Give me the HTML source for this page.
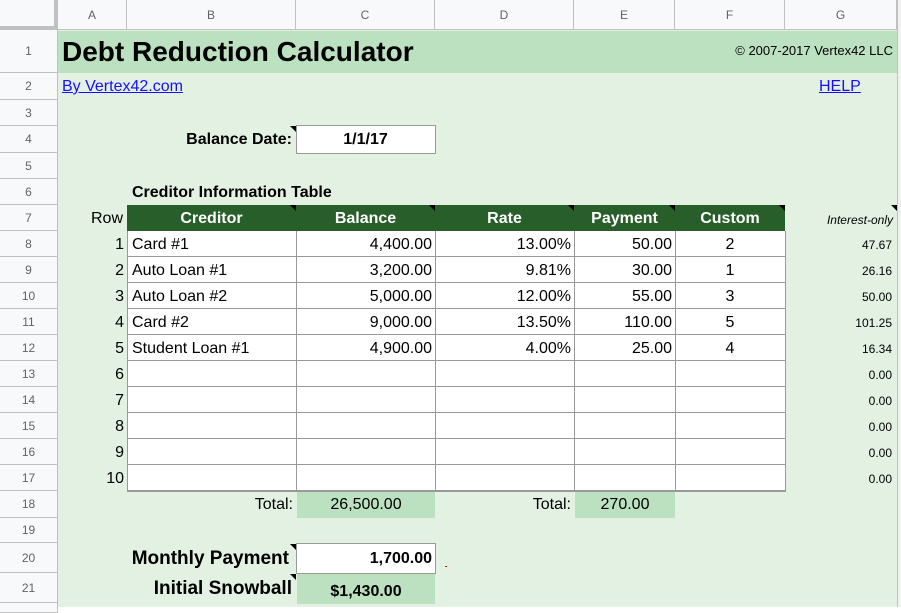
<!DOCTYPE html>
<html><head><meta charset="utf-8"><style>
body{margin:0;width:901px;height:607px;overflow:hidden;background:#fff;font-family:"Liberation Sans",Arial,sans-serif;position:relative}
.a{position:absolute;box-sizing:border-box}
.ch{position:absolute;top:0;height:30px;line-height:30px;text-align:center;font-size:12px;color:#5f6368;border-right:1px solid #c0c0c0;border-bottom:1px solid #c0c0c0;background:#f8f9fa;box-sizing:border-box}
.rh{position:absolute;left:0;width:58px;text-align:center;font-size:12px;color:#5f6368;border-bottom:1px solid #c0c0c0;border-right:1px solid #c0c0c0;background:#f8f9fa;box-sizing:border-box}
.t{position:absolute;font-size:16px;color:#000;white-space:nowrap;height:26px;line-height:26px;box-sizing:border-box}
.r{text-align:right;padding-right:3px}
.c{text-align:center}
.b{font-weight:bold}
.s{font-size:12px}
.vl{position:absolute;top:205px;height:286px;width:1px;background:#999}
.tri{position:absolute;width:0;height:0;border-top:6px solid #000;border-left:6px solid transparent}
</style></head><body>
<!-- sheet bg -->
<div class="a" style="left:58px;top:30px;width:839px;height:577px;background:#e3f1e3"></div>
<div class="a" style="left:897px;top:0;width:4px;height:607px;background:#f1f1f1;border-left:1px solid #c0c0c0"></div>
<div class="a" style="left:58px;top:31px;width:839px;height:42px;background:#bce1c1"></div>
<!-- column headers -->
<div class="ch" style="left:0;width:58px;border-right:4px solid #c0c0c0;border-bottom:4px solid #c0c0c0"></div>
<div class="ch" style="left:58px;width:69px">A</div>
<div class="ch" style="left:127px;width:169px">B</div>
<div class="ch" style="left:296px;width:139px">C</div>
<div class="ch" style="left:435px;width:139px">D</div>
<div class="ch" style="left:574px;width:101px">E</div>
<div class="ch" style="left:675px;width:110px">F</div>
<div class="ch" style="left:785px;width:112px">G</div>
<!-- row headers -->
<div class="rh" style="top:30px;height:43px;line-height:43px">1</div>
<div class="rh" style="top:73px;height:27px;line-height:27px">2</div>
<div class="rh" style="top:100px;height:26px;line-height:26px">3</div>
<div class="rh" style="top:126px;height:27px;line-height:27px">4</div>
<div class="rh" style="top:153px;height:26px;line-height:26px">5</div>
<div class="rh" style="top:179px;height:26px;line-height:26px">6</div>
<div class="rh" style="top:205px;height:26px;line-height:26px">7</div>
<div class="rh" style="top:231px;height:26px;line-height:26px">8</div>
<div class="rh" style="top:257px;height:26px;line-height:26px">9</div>
<div class="rh" style="top:283px;height:26px;line-height:26px">10</div>
<div class="rh" style="top:309px;height:26px;line-height:26px">11</div>
<div class="rh" style="top:335px;height:26px;line-height:26px">12</div>
<div class="rh" style="top:361px;height:26px;line-height:26px">13</div>
<div class="rh" style="top:387px;height:26px;line-height:26px">14</div>
<div class="rh" style="top:413px;height:26px;line-height:26px">15</div>
<div class="rh" style="top:439px;height:26px;line-height:26px">16</div>
<div class="rh" style="top:465px;height:26px;line-height:26px">17</div>
<div class="rh" style="top:491px;height:27px;line-height:27px">18</div>
<div class="rh" style="top:518px;height:25px;line-height:25px">19</div>
<div class="rh" style="top:543px;height:30px;line-height:30px">20</div>
<div class="rh" style="top:573px;height:30px;line-height:30px">21</div>
<div class="rh" style="top:603px;height:10px"></div>

<!-- row 1/2 -->
<div class="t b" style="left:62px;top:31px;height:42px;line-height:42px;font-size:28px">Debt Reduction Calculator</div>
<div class="t" style="left:700px;top:38px;width:193px;text-align:right;font-size:13px">© 2007-2017 Vertex42 LLC</div>
<div class="t" style="left:62px;top:74px;color:#1a0dff;text-decoration:underline">By Vertex42.com</div>
<div class="t" style="left:819px;top:74px;color:#1a0dff;text-decoration:underline">HELP</div>

<!-- balance date -->
<div class="t b r" style="left:127px;top:127px;width:169px;padding-right:4px">Balance Date:</div>
<div class="tri" style="left:290px;top:126px"></div>
<div class="a" style="left:296px;top:125px;width:140px;height:29px;background:#fff;border:1px solid #999"></div>
<div class="t b c" style="left:296px;top:127px;width:139px">1/1/17</div>

<div class="t b" style="left:132px;top:180px">Creditor Information Table</div>

<!-- header row 7 -->
<div class="a" style="left:127px;top:205px;width:658px;height:26px;background:#275e2a"></div>
<div class="t" style="left:58px;top:206px;width:69px;text-align:right;padding-right:4px">Row</div>
<div class="t b c" style="left:127px;top:206px;width:169px;color:#fff">Creditor</div>
<div class="t b c" style="left:296px;top:206px;width:139px;color:#fff">Balance</div>
<div class="t b c" style="left:435px;top:206px;width:139px;color:#fff">Rate</div>
<div class="t b c" style="left:574px;top:206px;width:101px;color:#fff">Payment</div>
<div class="t b c" style="left:675px;top:206px;width:110px;color:#fff">Custom</div>
<div class="tri" style="left:290px;top:205px"></div>
<div class="tri" style="left:429px;top:205px"></div>
<div class="tri" style="left:568px;top:205px"></div>
<div class="tri" style="left:669px;top:205px"></div>
<div class="tri" style="left:779px;top:205px"></div>
<div class="tri" style="left:891px;top:205px"></div>
<div class="t r" style="left:785px;top:207px;width:112px;font-size:12px;font-style:italic;padding-right:4px">Interest-only</div>

<!-- table body -->
<div class="a" style="left:127px;top:231px;width:659px;height:261px;background:#fff repeating-linear-gradient(to bottom,transparent 0,transparent 25px,#999 25px,#999 26px);border-left:1px solid #999;border-right:1px solid #999;border-bottom:1px solid #999"></div>
<div class="vl" style="left:296px;top:231px;height:260px"></div>
<div class="vl" style="left:435px;top:231px;height:260px"></div>
<div class="vl" style="left:574px;top:231px;height:260px"></div>
<div class="vl" style="left:675px;top:231px;height:260px"></div>

<!-- row numbers -->
<div class="t r" style="left:58px;top:232px;width:69px">1</div>
<div class="t r" style="left:58px;top:258px;width:69px">2</div>
<div class="t r" style="left:58px;top:284px;width:69px">3</div>
<div class="t r" style="left:58px;top:310px;width:69px">4</div>
<div class="t r" style="left:58px;top:336px;width:69px">5</div>
<div class="t r" style="left:58px;top:362px;width:69px">6</div>
<div class="t r" style="left:58px;top:388px;width:69px">7</div>
<div class="t r" style="left:58px;top:414px;width:69px">8</div>
<div class="t r" style="left:58px;top:440px;width:69px">9</div>
<div class="t r" style="left:58px;top:466px;width:69px">10</div>

<!-- data -->
<div class="t" style="left:132px;top:232px">Card #1</div>
<div class="t" style="left:132px;top:258px">Auto Loan #1</div>
<div class="t" style="left:132px;top:284px">Auto Loan #2</div>
<div class="t" style="left:132px;top:310px">Card #2</div>
<div class="t" style="left:132px;top:336px">Student Loan #1</div>

<div class="t r" style="left:296px;top:232px;width:139px">4,400.00</div>
<div class="t r" style="left:296px;top:258px;width:139px">3,200.00</div>
<div class="t r" style="left:296px;top:284px;width:139px">5,000.00</div>
<div class="t r" style="left:296px;top:310px;width:139px">9,000.00</div>
<div class="t r" style="left:296px;top:336px;width:139px">4,900.00</div>

<div class="t r" style="left:435px;top:232px;width:139px">13.00%</div>
<div class="t r" style="left:435px;top:258px;width:139px">9.81%</div>
<div class="t r" style="left:435px;top:284px;width:139px">12.00%</div>
<div class="t r" style="left:435px;top:310px;width:139px">13.50%</div>
<div class="t r" style="left:435px;top:336px;width:139px">4.00%</div>

<div class="t r" style="left:574px;top:232px;width:101px">50.00</div>
<div class="t r" style="left:574px;top:258px;width:101px">30.00</div>
<div class="t r" style="left:574px;top:284px;width:101px">55.00</div>
<div class="t r" style="left:574px;top:310px;width:101px">110.00</div>
<div class="t r" style="left:574px;top:336px;width:101px">25.00</div>

<div class="t c" style="left:675px;top:232px;width:110px">2</div>
<div class="t c" style="left:675px;top:258px;width:110px">1</div>
<div class="t c" style="left:675px;top:284px;width:110px">3</div>
<div class="t c" style="left:675px;top:310px;width:110px">5</div>
<div class="t c" style="left:675px;top:336px;width:110px">4</div>

<div class="t r s" style="left:785px;top:232px;width:112px;padding-right:5px">47.67</div>
<div class="t r s" style="left:785px;top:258px;width:112px;padding-right:5px">26.16</div>
<div class="t r s" style="left:785px;top:284px;width:112px;padding-right:5px">50.00</div>
<div class="t r s" style="left:785px;top:310px;width:112px;padding-right:5px">101.25</div>
<div class="t r s" style="left:785px;top:336px;width:112px;padding-right:5px">16.34</div>
<div class="t r s" style="left:785px;top:362px;width:112px;padding-right:5px">0.00</div>
<div class="t r s" style="left:785px;top:388px;width:112px;padding-right:5px">0.00</div>
<div class="t r s" style="left:785px;top:414px;width:112px;padding-right:5px">0.00</div>
<div class="t r s" style="left:785px;top:440px;width:112px;padding-right:5px">0.00</div>
<div class="t r s" style="left:785px;top:466px;width:112px;padding-right:5px">0.00</div>

<!-- totals -->
<div class="a" style="left:297px;top:492px;width:138px;height:26px;background:#bce1c1"></div>
<div class="a" style="left:575px;top:492px;width:100px;height:26px;background:#bce1c1"></div>
<div class="t r" style="left:127px;top:492px;width:169px">Total:</div>
<div class="t c" style="left:297px;top:492px;width:138px">26,500.00</div>
<div class="t r" style="left:435px;top:492px;width:139px">Total:</div>
<div class="t c" style="left:575px;top:492px;width:100px">270.00</div>

<!-- monthly payment -->
<div class="t b r" style="left:58px;top:544px;width:238px;height:29px;line-height:29px;font-size:19px;padding-right:7px">Monthly Payment</div>
<div class="tri" style="left:290px;top:544px"></div>
<div class="a" style="left:296px;top:543px;width:140px;height:31px;background:#fff;border:1px solid #999"></div>
<div class="t b r" style="left:296px;top:544px;width:139px;height:29px;line-height:29px">1,700.00</div>
<div class="a" style="left:445px;top:566px;width:2px;height:1px;background:#e00"></div>
<div class="t b r" style="left:58px;top:574px;width:238px;height:29px;line-height:29px;font-size:19px;padding-right:4px">Initial Snowball</div>
<div class="tri" style="left:290px;top:574px"></div>
<div class="a" style="left:297px;top:574px;width:138px;height:30px;background:#bce1c1"></div>
<div class="t b c" style="left:297px;top:577px;width:138px;height:29px;line-height:29px">$1,430.00</div>
</body></html>
